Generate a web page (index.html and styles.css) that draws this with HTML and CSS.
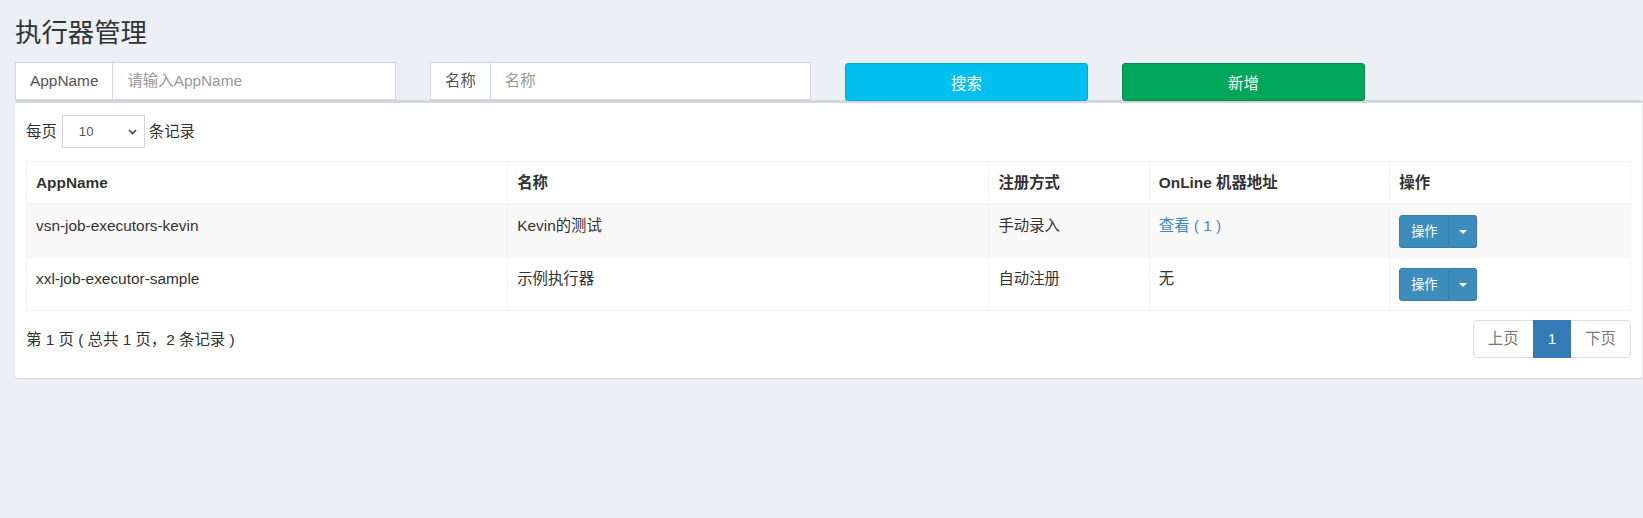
FILE: index.html
```html
<!DOCTYPE html>
<html lang="zh-CN">
<head>
<meta charset="utf-8">
<title>执行器管理</title>
<link rel="stylesheet" href="styles.css">
</head>
<body>
<div class="page">
  <section class="content-header">
    <h1>执行器管理</h1>
  </section>
  <section class="content">
    <div class="filters">
      <div class="input-group">
        <span class="addon">AppName</span>
        <input class="field" type="text" placeholder="请输入AppName">
      </div>
      <div class="input-group">
        <span class="addon">名称</span>
        <input class="field" type="text" placeholder="名称">
      </div>
      <button class="btn btn-search" type="button">搜索</button>
      <button class="btn btn-add" type="button">新增</button>
    </div>

    <div class="box">
      <div class="box-body">
        <div class="length">
          <span>每页</span>
          <span class="select">10
            <svg class="chev" width="9" height="6" viewBox="0 0 9 6"><path d="M1 1 L4.5 4.5 L8 1" fill="none" stroke="#444" stroke-width="1.6"/></svg>
          </span>
          <span>条记录</span>
        </div>

        <table class="grid">
          <colgroup>
            <col class="c30"><col class="c30"><col class="c10"><col class="c15"><col class="c15">
          </colgroup>
          <thead>
            <tr>
              <th>AppName</th>
              <th>名称</th>
              <th>注册方式</th>
              <th>OnLine 机器地址</th>
              <th>操作</th>
            </tr>
          </thead>
          <tbody>
            <tr class="odd">
              <td>vsn-job-executors-kevin</td>
              <td>Kevin的测试</td>
              <td>手动录入</td>
              <td><a class="link" href="#">查看 ( 1 )</a></td>
              <td>
                <div class="btn-group">
                  <span class="op">操作</span><span class="op-caret"><span class="caret"></span></span>
                </div>
              </td>
            </tr>
            <tr>
              <td>xxl-job-executor-sample</td>
              <td>示例执行器</td>
              <td>自动注册</td>
              <td>无</td>
              <td>
                <div class="btn-group">
                  <span class="op">操作</span><span class="op-caret"><span class="caret"></span></span>
                </div>
              </td>
            </tr>
          </tbody>
        </table>

        <div class="footer">
          <div class="info">第 1 页 ( 总共 1 页，2 条记录 )</div>
          <ul class="pagination">
            <li class="disabled"><a href="#">上页</a></li>
            <li class="active"><a href="#">1</a></li>
            <li class="disabled"><a href="#">下页</a></li>
          </ul>
        </div>
      </div>
    </div>
  </section>
</div>
</body>
</html>
```

FILE: styles.css
```css
* { box-sizing: border-box; }

html, body {
  margin: 0;
  padding: 0;
}

body {
  background: #ecf0f5;
  color: #333;
  font-family: "Liberation Sans", Arial, "Noto Sans CJK SC", sans-serif;
  font-size: 15.4px;
  line-height: 22px;
  width: 1643px;
  height: 518px;
  overflow: hidden;
}

.content-header {
  padding: 19px 15px 0 15px;
}

.content-header h1 {
  margin: 0;
  font-size: 26.4px;
  line-height: 29px;
  font-weight: 400;
  color: #333;
}

.content {
  padding: 14px 1px 0 15px;
}

.filters {
  display: flex;
  gap: 34px;
  height: 38px;
}

.input-group {
  display: flex;
  width: 381px;
  height: 38px;
}

.addon {
  display: flex;
  align-items: center;
  padding: 0 14px;
  background: #fff;
  border: 1px solid #d2d6de;
  border-right: 0;
  color: #555;
  white-space: nowrap;
}

.field {
  flex: 1;
  min-width: 0;
  height: 38px;
  border: 1px solid #d2d6de;
  padding: 0 14px;
  font-family: "Liberation Sans", Arial, "Noto Sans CJK SC", sans-serif;
  font-size: 15.4px;
  color: #555;
  background: #fff;
  outline: none;
}

.field::placeholder {
  color: #999;
}

.btn {
  width: 243px;
  height: 38px;
  margin-top: 1px;
  border-radius: 3px;
  color: #fff;
  font-family: "Liberation Sans", Arial, "Noto Sans CJK SC", sans-serif;
  font-size: 15.4px;
  padding: 0;
  cursor: pointer;
}

.btn-search {
  background: #00c0ef;
  border: 1px solid #00acd6;
}

.btn-add {
  background: #00a65a;
  border: 1px solid #008d4c;
}

.box {
  background: #fff;
  border-top: 3px solid #d2d6de;
  border-radius: 3px;
  box-shadow: 0 1px 1px rgba(0, 0, 0, 0.1);
}

.box-body {
  padding: 11px 11px 19.5px 11px;
}

.length {
  display: flex;
  align-items: center;
  gap: 4px;
  height: 34px;
  padding-top: 1px;
}

.select {
  display: inline-flex;
  align-items: center;
  justify-content: space-between;
  width: 83px;
  height: 33px;
  border: 1px solid #d2d6de;
  padding: 0 7px 0 16px;
  font-size: 13.2px;
  color: #555;
  margin-left: 1px;
}

.chev {
  display: block;
}

.grid {
  width: 100%;
  margin-top: 13px;
  border-collapse: collapse;
  border: 1px solid #f4f4f4;
  table-layout: fixed;
}

.c30 { width: 30%; }
.c10 { width: 10%; }
.c15 { width: 15%; }

.grid th {
  text-align: left;
  font-weight: 700;
  padding: 9.5px 9px 9px 9px;
  line-height: 22px;
  border: 1px solid #f4f4f4;
  border-bottom-width: 2px;
}

.grid td {
  padding: 10.5px 9px 8.5px 9px;
  line-height: 22px;
  vertical-align: top;
  border: 1px solid #f4f4f4;
}

.grid tr.odd td {
  background: #f9f9f9;
}

.link {
  color: #3c8dbc;
  text-decoration: none;
}

.btn-group {
  display: flex;
  height: 33px;
  width: 78px;
}

.op {
  display: flex;
  align-items: center;
  justify-content: center;
  width: 50px;
  background: #3c8dbc;
  border: 1px solid #367fa9;
  border-radius: 3px 0 0 3px;
  color: #fff;
  font-size: 13.2px;
}

.op-caret {
  display: flex;
  align-items: center;
  justify-content: center;
  width: 28px;
  background: #3c8dbc;
  border: 1px solid #367fa9;
  border-left: 0;
  border-radius: 0 3px 3px 0;
}

.caret {
  width: 0;
  height: 0;
  border-top: 4px solid #fff;
  border-left: 4px solid transparent;
  border-right: 4px solid transparent;
}

.footer {
  display: flex;
  justify-content: space-between;
  align-items: flex-start;
  margin-top: 9.5px;
}

.info {
  padding-top: 9px;
}

.pagination {
  display: flex;
  list-style: none;
  margin: 0;
  padding: 0;
}

.pagination li a {
  display: block;
  height: 38px;
  padding: 7px 14px;
  line-height: 22px;
  border: 1px solid #ddd;
  margin-left: -1px;
  color: #777;
  text-decoration: none;
  background: #fff;
}

.pagination li:first-child a {
  margin-left: 0;
  border-radius: 4px 0 0 4px;
}

.pagination li:last-child a {
  border-radius: 0 4px 4px 0;
}

.pagination li.active a {
  background: #337ab7;
  border-color: #337ab7;
  color: #fff;
  position: relative;
  z-index: 1;
}
```
